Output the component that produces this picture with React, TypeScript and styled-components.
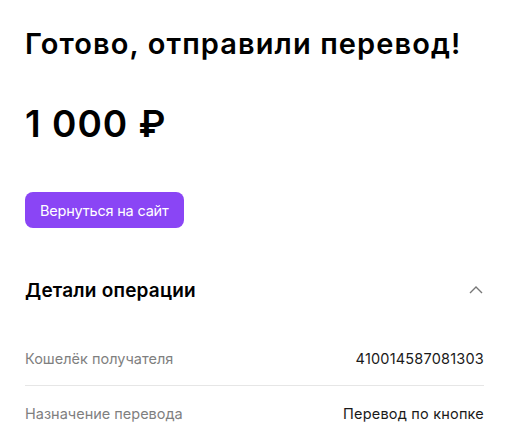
import React, { useState } from "react";
import styled, { createGlobalStyle } from "styled-components";

const GlobalStyle = createGlobalStyle`
  html, body {
    margin: 0;
    padding: 0;
    background: #fff;
  }
  body {
    font-family: Inter, "Noto Sans", sans-serif;
    color: #000;
  }
`;

type Detail = { label: string; value: string };

const details: Detail[] = [
  { label: "Кошелёк получателя", value: "410014587081303" },
  { label: "Назначение перевода", value: "Перевод по кнопке" },
];

const App = () => {
  const [open, setOpen] = useState(true);

  return (
    <>
      <GlobalStyle />
      <Page>
        <Title>Готово, отправили перевод!</Title>
        <Amount>1 000 ₽</Amount>
        <BackButton>Вернуться на сайт</BackButton>

        <Section>
          <SectionHeader onClick={() => setOpen(!open)}>
            <SectionTitle>Детали операции</SectionTitle>
            <Chevron open={open} viewBox="0 0 16 16">
              <path d="M2 11 L8 5 L14 11" />
            </Chevron>
          </SectionHeader>

          {open && (
            <Rows>
              {details.map((d, i) => (
                <Row key={d.label} last={i === details.length - 1}>
                  <Label>{d.label}</Label>
                  <Value>{d.value}</Value>
                </Row>
              ))}
            </Rows>
          )}
        </Section>
      </Page>
    </>
  );
};

const Page = styled.div`
  display: flex;
  flex-direction: column;
  align-items: flex-start;
  padding: 24px 27px 0 25px;
`;

const Title = styled.h1`
  margin: 0;
  font-size: 29px;
  font-weight: 600;
  line-height: 40px;
  letter-spacing: 1.1px;
`;

const Amount = styled.div`
  margin-top: 37px;
  font-size: 37px;
  font-weight: 600;
  line-height: 46px;
  letter-spacing: 1px;
`;

const BackButton = styled.button`
  margin-top: 45px;
  height: 36px;
  padding: 0 15px;
  border: 0;
  border-radius: 8px;
  background: #8a45f5;
  color: #fff;
  font-family: Inter, "Noto Sans", sans-serif;
  font-size: 14.5px;
  font-weight: 400;
  letter-spacing: -0.2px;
  cursor: pointer;
`;

const Section = styled.div`
  align-self: stretch;
  margin-top: 42px;
`;

const SectionHeader = styled.div`
  display: flex;
  align-items: center;
  justify-content: space-between;
  height: 40px;
  cursor: pointer;
`;

const SectionTitle = styled.h2`
  margin: 0;
  font-size: 19px;
  font-weight: 600;
  letter-spacing: 0.2px;
`;

const Chevron = styled.svg<{ open: boolean }>`
  width: 16px;
  height: 16px;
  fill: none;
  stroke: #777;
  stroke-width: 1.4;
  transform: rotate(${(p) => (p.open ? 0 : 180)}deg);
`;

const Rows = styled.div`
  margin-top: 21px;
`;

const Row = styled.div<{ last: boolean }>`
  display: flex;
  justify-content: space-between;
  align-items: center;
  height: 54px;
  border-bottom: ${(p) => (p.last ? "none" : "1px solid #e6e6e6")};
  font-size: 14.5px;
`;

const Label = styled.span`
  color: #7f7f7f;
`;

const Value = styled.span<{}>`
  color: #1a1a1a;
  letter-spacing: 0.2px;
`;

export default App;
